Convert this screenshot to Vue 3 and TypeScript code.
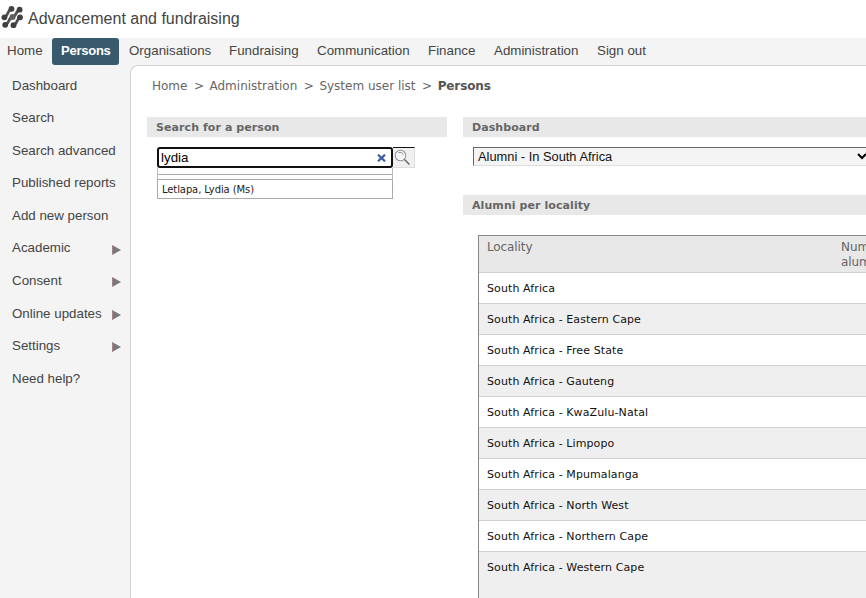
<script setup lang="ts">
interface NavItem { label: string; width: number; active?: boolean }
interface SideItem { label: string; height: number; sub?: boolean }

const nav: NavItem[] = [
  { label: 'Home', width: 52 },
  { label: 'Persons', width: 67, active: true },
  { label: 'Organisations', width: 100 },
  { label: 'Fundraising', width: 88 },
  { label: 'Communication', width: 111 },
  { label: 'Finance', width: 66 },
  { label: 'Administration', width: 103 },
  { label: 'Sign out', width: 68 },
]
const side: SideItem[] = [
  { label: 'Dashboard', height: 32 },
  { label: 'Search', height: 33 },
  { label: 'Search advanced', height: 32 },
  { label: 'Published reports', height: 33 },
  { label: 'Add new person', height: 32 },
  { label: 'Academic', height: 33, sub: true },
  { label: 'Consent', height: 33, sub: true },
  { label: 'Online updates', height: 32, sub: true },
  { label: 'Settings', height: 33, sub: true },
  { label: 'Need help?', height: 33 },
]
const crumbs: string[] = ['Home', 'Administration', 'System user list', 'Persons']
const provinces: string[] = [
  '', 'Eastern Cape', 'Free State', 'Gauteng', 'KwaZulu-Natal', 'Limpopo',
  'Mpumalanga', 'North West', 'Northern Cape', 'Western Cape',
]
const localities = provinces.map((p) => (p ? `South Africa - ${p}` : 'South Africa'))
</script>

<template>
  <div class="page">
    <header class="brand">
      <svg class="logo" viewBox="0 0 22 24" width="22" height="24">
        <g stroke="#505050" stroke-width="2.800" fill="none">
          <path d="M3.300 12.300C7 12 6.500 4.500 10.500 3.800" />
          <path d="M4 20C8 19.500 7.500 12.500 11.500 12C15.500 11.500 15 5 19 4.700" />
          <path d="M12.500 20.200C16.500 19.500 15.500 13 19.500 12.300" />
        </g>
        <g fill="#404040">
          <circle cx="10.500" cy="3.800" r="2.900" /><circle cx="18.600" cy="4.700" r="2.900" />
          <circle cx="3.400" cy="12.300" r="2.900" />
          <circle cx="19" cy="12.300" r="2.900" /><circle cx="4.200" cy="19.800" r="2.900" />
          <circle cx="12.500" cy="20.200" r="2.900" />
        </g>
        <circle cx="11.500" cy="12" r="3" fill="#606060" />
      </svg>
      <span class="brand-name">Advancement and fundraising</span>
    </header>
    <nav class="topnav">
      <a v-for="n in nav" :key="n.label" :class="{ active: n.active }" :style="{ width: n.width + 'px' }">{{ n.label }}</a>
    </nav>
    <div class="body">
      <aside class="side">
        <a v-for="s in side" :key="s.label" :style="{ height: s.height + 'px' }">
          <span>{{ s.label }}</span>
          <svg v-if="s.sub" width="9" height="10" viewBox="0 0 9 10"><path d="M0 0L9 5L0 10Z" fill="#77777c" /><path d="M.5 .5V9.500" stroke="#a88484" stroke-width="1" /></svg>
        </a>
      </aside>
      <main class="main">
        <div class="crumbs">
          <template v-for="(c, i) in crumbs" :key="c">
            <b v-if="i === crumbs.length - 1">{{ c }}</b>
            <template v-else><span>{{ c }}</span><i>&gt;</i></template>
          </template>
        </div>
        <div class="columns">
          <section class="find">
            <h2>Search for a person</h2>
            <div class="search-row">
              <div class="field">
                <span>lydia</span>
                <svg width="9" height="8" viewBox="0 0 9 8"><path d="M1 .7L8 7.300M8 .7L1 7.300" stroke="#3c5ca8" stroke-width="2.200" /></svg>
              </div>
              <button class="go" aria-label="Search">
                <svg width="20" height="19" viewBox="0 0 20 19">
                  <circle cx="7.500" cy="7.500" r="5.200" fill="#f4f4f4" stroke="#9a9a9a" stroke-width="1.300" />
                  <circle cx="7.500" cy="7.500" r="4.200" fill="none" stroke="#fff" stroke-width="1" />
                  <path d="M5.500 4.500Q9 3 10.500 6.500" stroke="#888" fill="none" />
                  <path d="M11.500 11.500L16.500 16.500" stroke="#666" stroke-width="1.500" />
                </svg>
              </button>
            </div>
            <div class="gap" />
            <div class="option">Letlapa, Lydia (Ms)</div>
          </section>
          <section class="dash">
            <h2>Dashboard</h2>
            <div class="select">
              <span>Alumni - In South Africa</span>
              <svg width="10" height="7" viewBox="0 0 10 7"><path d="M1 1L5 5L9 1" fill="none" stroke="#000" stroke-width="2" /></svg>
            </div>
            <h2>Alumni per locality</h2>
            <div class="table">
              <div class="thead"><span>Locality</span><span class="num">Number of alumni</span></div>
              <div v-for="l in localities" :key="l" class="row">{{ l }}</div>
            </div>
          </section>
        </div>
      </main>
    </div>
  </div>
</template>

<style>
body { margin: 0; overflow: hidden; background: #fff; }
</style>
<style scoped>
* { box-sizing: border-box; }
.page { width: 866px; height: 598px; overflow: hidden; display: flex; flex-direction: column; font-family: "Liberation Sans", Arial, sans-serif; color: #444; white-space: nowrap; }
.brand { height: 38px; display: flex; padding: 5px 0 0 1px; flex: none; }
.brand-name { font-size: 16px; line-height: 27px; margin-left: 5px; }
.topnav { height: 27px; flex: none; display: flex; background: #f4f4f4; font-size: 13.33px; line-height: 25px; }
.topnav a { padding-left: 9px; flex: none; }
.topnav a:first-child { padding-left: 7px; }
.topnav .active { background: #385a6c; color: #fff; border-radius: 3px; font-size: 13px; font-weight: bold; letter-spacing: -0.25px; }
.topnav .active ~ a { padding-left: 10px; }
.body { flex: 1; min-height: 0; display: flex; background: #f4f4f4; }
.side { width: 130px; flex: none; display: flex; flex-direction: column; padding: 13px 9px 0 12px; font-size: 13.33px; line-height: 16px; }
.side a { display: flex; justify-content: space-between; flex: none; }
.side svg { margin-top: 4px; }
.side a:nth-child(6) svg { margin-top: 5px; }
.main { flex: 1; min-width: 0; background: #fff; border: solid #d2d2d2; border-width: 1px 0 0 1px; border-radius: 8px 0 0 0; overflow: hidden; font-family: "DejaVu Sans", Verdana, sans-serif; }
.crumbs { height: 51px; padding: 12px 0 0 21px; font-size: 12px; line-height: 16px; color: #666; }
.crumbs i { font-style: normal; margin: 0 5.500px 0 6.500px; }
.crumbs b { color: #555; letter-spacing: -0.1px; }
.columns { display: flex; gap: 16px; padding-left: 16px; }
.find { width: 300px; flex: none; }
.dash { width: 440px; flex: none; }
h2 { margin: 0; height: 20px; padding-left: 9px; background: #e8e8e8; font-size: 11px; line-height: 22px; font-weight: bold; color: #666; letter-spacing: 0.08px; }
.search-row { display: flex; margin: 10px 0 0 10px; }
.field { width: 236px; height: 21px; border: 2px solid #101010; border-radius: 3px; display: flex; justify-content: space-between; align-items: center; padding: 0 5px 0 2px; font: 13.33px/17px "Liberation Sans", sans-serif; color: #000; }
.field svg { margin-top: 1px; }
.go { width: 22px; height: 21px; padding: 0; border: 1px solid #ddd; border-top-color: #111; border-left: 0; background: #f0f0f0; display: flex; }
.gap { width: 236px; height: 11px; margin-left: 10px; border: 1px solid #bbb; border-top: 0; border-bottom: 0; background: linear-gradient(#aaa, #aaa) 0 6px / 100% 1px no-repeat; }
.option { width: 236px; height: 20px; margin-left: 10px; border: 1px solid #aaa; padding-left: 4px; font-size: 10px; line-height: 19px; letter-spacing: -0.1px; color: #222; }
.select { height: 19px; margin: 10px 0 29px 10px; width: 400px; border: 1px solid #ddd; border-top-color: #666; border-left-color: #666; background: #f4f4f4; font: 12.85px/17px "Liberation Sans", sans-serif; color: #111; padding: 0 5px 0 4px; display: flex; justify-content: space-between; align-items: center; }
.table { margin: 20px 0 0 15px; width: 440px; border: solid #888; border-width: 1px 0 0 1px; }
.thead { height: 37px; display: flex; background: #e8e8e8; border-bottom: 1px solid #d2d2d2; padding: 4px 0 0 8px; font-size: 12px; line-height: 15px; letter-spacing: -0.1px; color: #666; }
.thead span:first-child { width: 354px; flex: none; }
.num { width: 70px; flex: none; white-space: normal; }
.row { height: 31px; padding-left: 8px; font-size: 11px; line-height: 32px; letter-spacing: 0.1px; color: #111; border-bottom: 1px solid #d2d2d2; }
.row:nth-child(odd) { background: #efefef; }
.row:last-child { height: 50px; border: 0; }
</style>
